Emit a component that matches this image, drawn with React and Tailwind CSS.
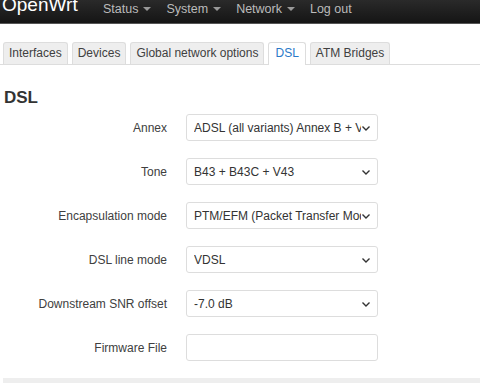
import React from "react";

const navItems = ["Status", "System", "Network"];
const tabs = ["Interfaces", "Devices", "Global network options", "DSL", "ATM Bridges"];

const rows = [
  { label: "Annex", value: "ADSL (all variants) Annex B + VDSL" },
  { label: "Tone", value: "B43 + B43C + V43" },
  { label: "Encapsulation mode", value: "PTM/EFM (Packet Transfer Mode)" },
  { label: "DSL line mode", value: "VDSL" },
  { label: "Downstream SNR offset", value: "-7.0 dB" },
  { label: "Firmware File", input: true },
];

function Caret() {
  return <span className="ml-[5px] inline-block border-x-[4px] border-t-[4px] border-x-transparent border-t-[#999] align-middle" />;
}

function Chevron() {
  return (
    <svg width="10" height="10" viewBox="0 0 10 10" className="shrink-0">
      <path d="M1.5 3.5 L5 7 L8.5 3.5" fill="none" stroke="#333" strokeWidth="1.4" />
    </svg>
  );
}

export default function App() {
  return (
    <div className="h-[383px] w-[480px] overflow-hidden bg-white font-['Liberation_Sans',Arial,sans-serif] text-[12px] text-[#404040]">
      <div className="flex h-[24px] items-start overflow-hidden border-b border-[#555] bg-gradient-to-b from-[#2a2a2a] to-[#151515]">
        <div className="-mt-[7px] ml-[2px] w-[101px] shrink-0 text-[19px] leading-[24px] text-white">OpenWrt</div>
        <div className="flex items-center gap-[15px] pt-[1px] text-[12.5px] leading-[16px] text-[#bbb]">
          {navItems.map((n) => (
            <span key={n} className="flex items-center">
              {n}
              <Caret />
            </span>
          ))}
          <span>Log out</span>
        </div>
      </div>

      <div className="mt-[18px] flex items-end gap-[4px] border-b border-[#ddd] pl-[3px]">
        {tabs.map((t) => (
          <div
            key={t}
            className={
              t === "DSL"
                ? "-mb-[1px] h-[23px] rounded-t-[3px] border border-b-0 border-[#ddd] bg-white px-[6px] leading-[21px] text-[#2a79c8]"
                : "h-[22px] rounded-t-[3px] border border-b-0 border-[#ddd] bg-[#eee] px-[5px] leading-[21px] text-[#404040]"
            }
          >
            {t}
          </div>
        ))}
      </div>

      <h2 className="ml-[4px] mt-[22px] text-[17px] font-bold leading-[22px] text-[#333]">DSL</h2>

      <div className="mt-[5px] flex flex-col gap-[17px]">
        {rows.map((r) => (
          <div key={r.label} className="flex items-center">
            <div className="w-[167px] text-right">{r.label}</div>
            <div className="ml-[19px] flex h-[27px] w-[192px] items-center rounded-[3px] border border-[#ddd] bg-white pl-[7px] pr-[6px] text-[#333]">
              {!r.input && (
                <>
                  <span className="flex-1 overflow-hidden whitespace-nowrap">{r.value}</span>
                  <Chevron />
                </>
              )}
            </div>
          </div>
        ))}
      </div>

      <div className="ml-[3px] mt-[17px] h-[6px] bg-[#eee]" />
    </div>
  );
}
